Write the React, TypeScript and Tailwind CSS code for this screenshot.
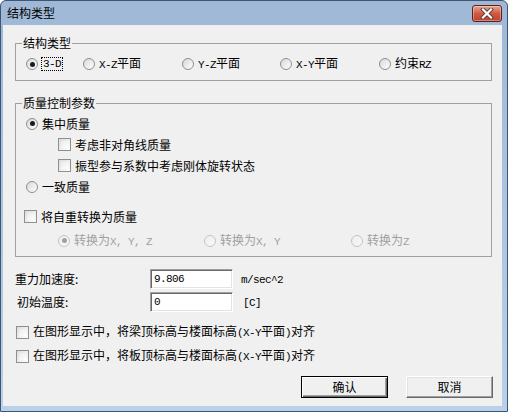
import React from "react";

const cjk = "font-['Noto_Sans_CJK_SC','Noto_Sans_CJK_JP',sans-serif]";
const mono = "font-['Liberation_Mono','Noto_Sans_CJK_SC',monospace] text-[11px] tracking-[-0.6px]";

const M = ({ children }: { children: React.ReactNode }) => (
  <span className={mono}>{children}</span>
);

const Radio = ({ checked, disabled }: { checked?: boolean; disabled?: boolean }) => (
  <span
    className={`flex h-[12px] w-[12px] shrink-0 items-center justify-center rounded-full border bg-gradient-to-br ${
      disabled ? "border-[#c4c4c4] from-[#eeeeee] to-[#f8f8f8]" : "border-[#8e8f8f] from-[#d8d8d8] to-white"
    }`}
  >
    {checked && (
      <span className={`h-[5px] w-[5px] rounded-full ${disabled ? "bg-[#a0a0a0]" : "bg-[#1a1a1a]"}`} />
    )}
  </span>
);

const Check = () => (
  <span className="flex h-[13px] w-[13px] shrink-0 border border-[#8e8f8f] bg-gradient-to-br from-[#dcdcdc] to-white p-[2px]">
    <span className="flex-1 bg-gradient-to-br from-[#eaeaea] to-white" />
  </span>
);

const RadioItem = ({
  w,
  checked,
  disabled,
  children,
}: {
  w: string;
  checked?: boolean;
  disabled?: boolean;
  children: React.ReactNode;
}) => (
  <div className={`flex items-center gap-[4px] ${w} ${disabled ? "text-[#a0a0a0]" : "text-black"}`}>
    <Radio checked={checked} disabled={disabled} />
    <span className="leading-[14px] whitespace-nowrap">{children}</span>
  </div>
);

const CheckItem = ({ children, className }: { children: React.ReactNode; className?: string }) => (
  <div className={`flex items-center gap-[4px] ${className ?? ""}`}>
    <Check />
    <span className="leading-[14px] whitespace-nowrap">{children}</span>
  </div>
);

const CloseButton = () => (
  <div className="flex h-[17px] w-[30px] items-center justify-center rounded-[3px] border border-[#5e2119] bg-gradient-to-b from-[#e8a493] via-[#cf5a44] to-[#c0412c] shadow-[inset_0_0_0_1px_rgba(255,255,255,0.35)]">
    <svg width="14" height="11" viewBox="0 0 14 11">
      <path d="M3 1.5 L11 9.5 M11 1.5 L3 9.5" stroke="#5b3a36" strokeWidth="4" strokeLinecap="square" />
      <path d="M3 1.5 L11 9.5 M11 1.5 L3 9.5" stroke="#ffffff" strokeWidth="2.2" strokeLinecap="square" />
    </svg>
  </div>
);

const inputCls =
  "h-[20px] w-[83px] bg-white border border-t-[#a0a0a0] border-l-[#a0a0a0] border-b-white border-r-white shadow-[inset_1px_1px_0_#696969,inset_-1px_-1px_0_#e3e3e3] pl-[3px] flex items-center";

export default function App() {
  return (
    <div
      className={`flex h-[412px] w-[508px] flex-col rounded-t-[6px] border border-[#3d5675] bg-gradient-to-b from-[#9fb8d5] to-[#bad0e8] text-[12px] ${cjk}`}
    >
      {/* title bar */}
      <div className="flex h-[24px] items-start justify-between pl-[6px] pr-[5px]">
        <span className="mt-[5px] leading-[14px] text-black">结构类型</span>
        <div className="mt-[4px]">
          <CloseButton />
        </div>
      </div>

      {/* client area */}
      <div className="mb-[5px] ml-[2px] mr-[5px] flex flex-1 flex-col bg-[#f0f0f0] text-black">
        <fieldset className="ml-[12px] mt-[11px] w-[477px] border border-[#a0a0a0] pb-[9px] pl-[10px] pt-[7px]">
          <legend className="ml-[-4px] px-[1px] leading-[14px]">结构类型</legend>
          <div className="flex h-[14px] items-center">
            <div className="flex w-[57px] items-center gap-[3px]">
              <Radio checked />
              <span className={`border border-dotted border-black px-[1px] leading-[12px] ${mono}`}>3-D</span>
            </div>
            <RadioItem w="w-[99px]">
              <M>X-Z</M>平面
            </RadioItem>
            <RadioItem w="w-[98px]">
              <M>Y-Z</M>平面
            </RadioItem>
            <RadioItem w="w-[99px]">
              <M>X-Y</M>平面
            </RadioItem>
            <RadioItem w="w-[99px]">
              约束<M>RZ</M>
            </RadioItem>
          </div>
        </fieldset>

        <fieldset className="ml-[12px] mt-[15px] w-[477px] border border-[#a0a0a0] pb-[5px] pt-[3px]">
          <legend className="ml-[6px] px-[1px] leading-[14px]">质量控制参数</legend>
          <div className="flex h-[21px] items-center pl-[10px]">
            <RadioItem w="w-auto" checked>
              集中质量
            </RadioItem>
          </div>
          <CheckItem className="h-[21px] pl-[42px]">考虑非对角线质量</CheckItem>
          <CheckItem className="h-[21px] pl-[42px]">振型参与系数中考虑刚体旋转状态</CheckItem>
          <div className="flex h-[21px] items-center pl-[10px]">
            <RadioItem w="w-auto">一致质量</RadioItem>
          </div>
          <CheckItem className="mt-[9px] h-[21px] pl-[8px]">将自重转换为质量</CheckItem>
          <div className="mt-[3px] flex h-[21px] items-center pl-[42px]">
            <RadioItem w="w-[146px]" checked disabled>
              转换为<M>X, Y, Z</M>
            </RadioItem>
            <RadioItem w="w-[147px]" disabled>
              转换为<M>X, Y</M>
            </RadioItem>
            <RadioItem w="w-[100px]" disabled>
              转换为<M>Z</M>
            </RadioItem>
          </div>
        </fieldset>

        <div className="mt-[12px] flex flex-col gap-[3px] pl-[12px]">
          <div className="flex items-center">
            <span className="w-[135px] leading-[14px]">重力加速度:</span>
            <div className={inputCls}>
              <M>9.806</M>
            </div>
            <span className="ml-[8px]">
              <M>m/sec^2</M>
            </span>
          </div>
          <div className="flex items-center">
            <span className="ml-[2px] w-[133px] leading-[14px]">初始温度:</span>
            <div className={inputCls}>
              <M>0</M>
            </div>
            <span className="ml-[10px]">
              <M>[C]</M>
            </span>
          </div>
        </div>

        <CheckItem className="ml-[13px] mt-[13px] h-[14px]">
          在图形显示中，将梁顶标高与楼面标高<M>(X-Y</M>平面<M>)</M>对齐
        </CheckItem>
        <CheckItem className="ml-[13px] mt-[10px] h-[14px]">
          在图形显示中，将板顶标高与楼面标高<M>(X-Y</M>平面<M>)</M>对齐
        </CheckItem>

        <div className="mr-[9px] mt-[13px] flex justify-end gap-[18px]">
          <button className="h-[22px] w-[87px] border border-black bg-[#f0f0f0] leading-[14px] shadow-[inset_1px_1px_0_#fff,inset_-1px_-1px_0_#696969,inset_-2px_-2px_0_#a0a0a0]">
            确认
          </button>
          <button className="h-[22px] w-[87px] border border-b-[#696969] border-l-white border-r-[#696969] border-t-white bg-[#f0f0f0] leading-[14px] shadow-[inset_-1px_-1px_0_#a0a0a0,inset_1px_1px_0_#e3e3e3]">
            取消
          </button>
        </div>
      </div>
    </div>
  );
}
